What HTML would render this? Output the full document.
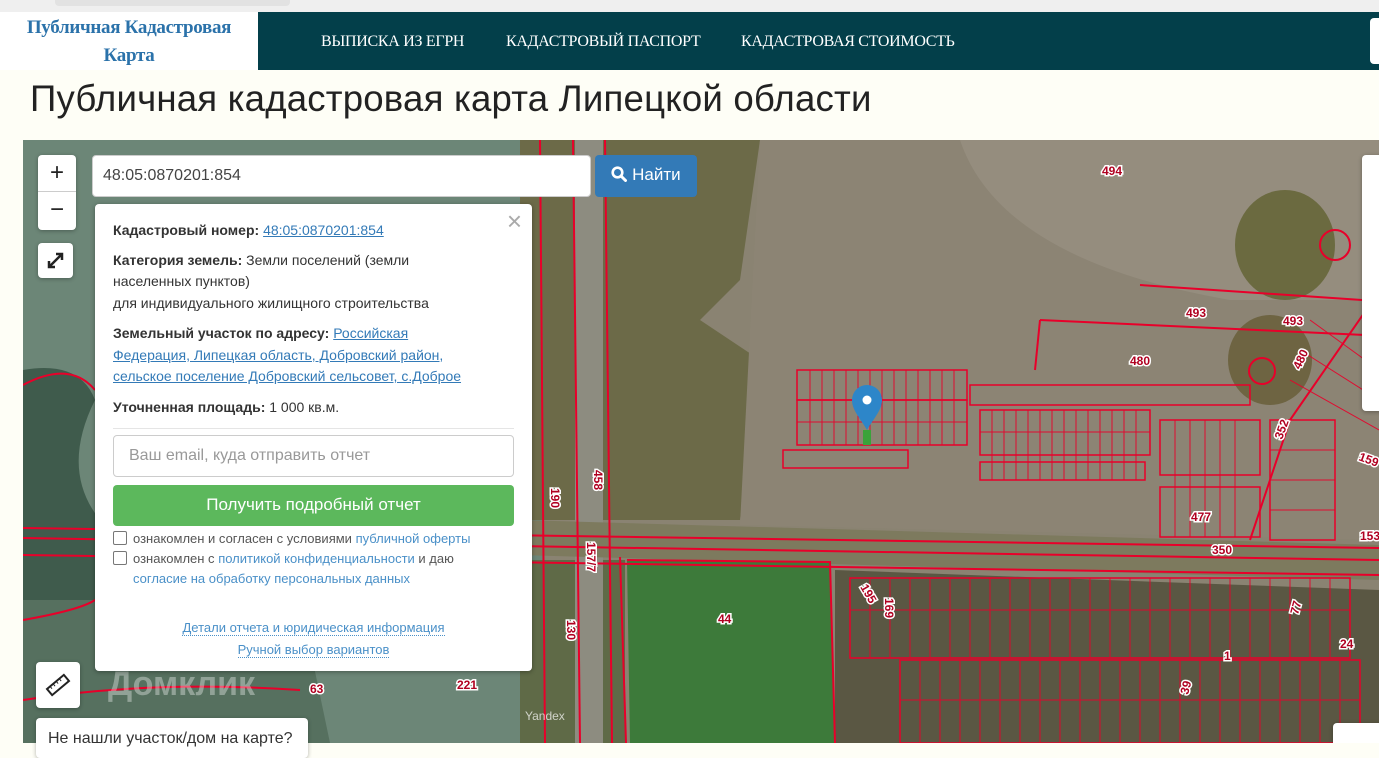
<!DOCTYPE html>
<html><head><meta charset="utf-8">
<style>
*{box-sizing:border-box;margin:0;padding:0}
body{width:1379px;height:743px;overflow:hidden;background:#fefef6;font-family:"Liberation Sans",sans-serif;position:relative}
.top{position:absolute;left:0;top:0;width:1379px;height:12px;background:#efefef}
.top i{position:absolute;left:55px;top:0;width:235px;height:6px;background:#e2e2e2;border-radius:0 0 4px 4px}
.logo{position:absolute;left:0;top:12px;width:258px;height:58px;background:#fff;text-align:center;font-family:"Liberation Serif",serif;font-weight:bold;color:#2b72aa;font-size:19px;line-height:28px;padding-top:2px;letter-spacing:-0.3px}
.nav{position:absolute;left:258px;top:12px;width:1121px;height:58px;background:#033f4a;color:#fff;font-family:"Liberation Serif",serif;font-size:16px}
.nav span{position:absolute;top:21px;letter-spacing:-0.3px}
.nav b{position:absolute;left:1112px;top:6px;width:20px;height:46px;background:#fff;border-radius:4px}
h1{position:absolute;left:30px;top:78px;font-weight:300;font-size:36.6px;color:#222;white-space:nowrap;letter-spacing:0.2px}
.map{position:absolute;left:23px;top:140px;width:1356px;height:603px;overflow:hidden}
.ctl{position:absolute;background:#fff;border-radius:4px;box-shadow:0 1px 4px rgba(0,0,0,.3)}
.pop{position:absolute;left:95px;top:204px;width:437px;height:467px;background:#fff;border-radius:4px;box-shadow:0 1px 5px rgba(0,0,0,.35);font-size:14px;color:#333;padding:16px 18px;white-space:nowrap}
.pop p{line-height:21.5px;margin-bottom:9px}
.pop a{color:#337ab7;text-decoration:underline}
.lbl{font-size:13px;color:#555;line-height:20px}
.lbl span{color:#4a90c8}
.cb{display:inline-block;width:14px;height:14px;border:1px solid #777;border-radius:2px;vertical-align:-2px;margin-right:6px;background:#fff}
</style></head><body>
<div class="top"><i></i></div>
<div class="logo">Публичная Кадастровая<br>Карта</div>
<div class="nav"><span style="left:63px">ВЫПИСКА ИЗ ЕГРН</span><span style="left:248px">КАДАСТРОВЫЙ ПАСПОРТ</span><span style="left:483px">КАДАСТРОВАЯ СТОИМОСТЬ</span><b></b></div>
<h1>Публичная кадастровая карта Липецкой области</h1>
<div class="map">
<svg width="1356" height="603" viewBox="23 140 1356 603" xmlns="http://www.w3.org/2000/svg" style="position:absolute;left:0;top:0">
<rect x="23" y="140" width="1356" height="603" fill="#8a8372"/>
<rect x="23" y="140" width="520" height="603" fill="#6c8677"/>
<path d="M23 370 Q80 360 95 400 Q60 470 100 520 L95 600 L23 600Z" fill="#3f5b4c"/>
<path d="M23 600 L300 600 L330 743 L23 743Z" fill="#56705f"/>
<path d="M520 140 L760 140 L740 280 L700 320 L760 360 L740 520 L520 520Z" fill="#6c6a48"/>
<path d="M520 560 L625 560 L625 743 L520 743Z" fill="#5f6a47"/>
<rect x="575" y="140" width="28" height="603" fill="#8d8c80"/>
<path d="M760 140 L1379 140 L1379 540 L740 525 Z" fill="#8c8474"/>
<path d="M960 140 L1379 140 L1379 300 L1230 300 Q1000 260 960 140Z" fill="#958d7e"/>
<ellipse cx="1285" cy="245" rx="50" ry="55" fill="#6b6a40"/>
<ellipse cx="1270" cy="360" rx="42" ry="45" fill="#6e6442"/>
<path d="M520 520 L1379 545 L1379 580 L520 555Z" fill="#7d7a5e"/>
<path d="M627 560 L830 562 L835 743 L630 743Z" fill="#3d7a3a"/>
<path d="M835 570 L1379 590 L1379 743 L835 743Z" fill="#5a5743"/>
<g stroke="#e8002a" stroke-width="2" fill="none">
<path d="M23 528 L1379 548"/><path d="M23 538 L1379 560"/><path d="M23 555 L1379 575"/>
<path d="M573 140 L580 743"/><path d="M605 140 L612 743"/><path d="M540 140 L545 743"/>
<path d="M627 560 L830 562 L835 743"/><path d="M620 557 L626 743"/>
<path d="M1040 320 L1365 335"/><path d="M1040 320 L1035 370"/><path d="M1140 285 L1362 300"/>
<path d="M1380 290 L1290 420 L1250 540"/>
<path d="M23 700 Q150 680 300 690"/><path d="M23 385 Q70 360 95 390"/><path d="M23 620 Q80 610 95 600"/>
</g>
<g stroke="#e8002a" stroke-width="1.5" fill="none">
<rect x="797" y="370" width="170" height="30"/><rect x="797" y="400" width="170" height="45"/><rect x="783" y="450" width="125" height="18"/>
<rect x="980" y="410" width="170" height="45"/><rect x="980" y="462" width="165" height="18"/><rect x="1160" y="420" width="100" height="55"/>
<rect x="1160" y="487" width="100" height="50"/><rect x="970" y="385" width="280" height="20"/>
<rect x="850" y="578" width="500" height="80"/><rect x="900" y="660" width="460" height="83"/><rect x="1270" y="420" width="65" height="120"/>
</g>
<g stroke="#e8002a" stroke-width="1" opacity=".9">
<path d="M810 370V445M822 370V445M834 370V445M846 370V445M858 370V445M870 370V445M882 370V445M894 370V445M906 370V445M918 370V445M930 370V445M942 370V445M954 370V445"/>
<path d="M992 410V480M1004 410V480M1016 410V480M1028 410V480M1040 410V480M1052 410V480M1064 410V480M1076 410V480M1088 410V480M1100 410V480M1112 410V480M1124 410V480M1136 410V480M1175 420V537M1190 420V537M1205 420V537M1220 420V537M1235 420V537"/>
<path d="M797 422H967M980 432H1150M850 610H1350M900 700H1360M1270 450H1335M1270 480H1335M1270 510H1335"/>
<path d="M870 578V658M890 578V658M910 578V658M930 578V658M950 578V658M970 578V658M990 578V658M1010 578V658M1030 578V658M1050 578V658M1070 578V658M1090 578V658M1110 578V658M1130 578V658M1150 578V658M1170 578V658M1190 578V658M1210 578V658M1230 578V658M1250 578V658M1270 578V658M1290 578V658M1310 578V658M1330 578V658"/>
<path d="M920 660V743M940 660V743M960 660V743M980 660V743M1000 660V743M1020 660V743M1040 660V743M1060 660V743M1080 660V743M1100 660V743M1120 660V743M1140 660V743M1160 660V743M1180 660V743M1200 660V743M1220 660V743M1240 660V743M1260 660V743M1280 660V743M1300 660V743M1320 660V743M1340 660V743"/>
<path d="M1300 350L1379 400M1290 380L1379 430M1310 320L1379 370"/>
</g>
<circle cx="1335" cy="245" r="15" stroke="#e8002a" stroke-width="2" fill="none"/>
<circle cx="1262" cy="371" r="13" stroke="#e8002a" stroke-width="2" fill="none"/>
<rect x="863" y="430" width="8" height="15" fill="#3aa33a"/>
<path d="M867 430 C860 418 852 410 852 400 A15 15 0 0 1 882 400 C882 410 874 418 867 430Z" fill="#2d86c9"/>
<circle cx="867" cy="400" r="4.5" fill="#fff"/>
<g font-size="12" fill="#b00020" font-weight="bold" font-family="Liberation Sans" stroke="#fff" stroke-width="3" paint-order="stroke">
<text x="1102" y="175">494</text><text x="1186" y="317">493</text><text x="1283" y="325">493</text><text x="1130" y="365">480</text>
<text x="1191" y="521">477</text><text x="1212" y="554">350</text><text x="718" y="623">44</text><text x="310" y="693">63</text><text x="457" y="689">221</text>
<text x="1224" y="660">1</text><text x="1340" y="648">24</text>
<text transform="translate(594 470) rotate(90)">458</text><text transform="translate(551 488) rotate(90)">190</text>
<text transform="translate(587 542) rotate(90)">157/7</text><text transform="translate(567 620) rotate(90)">130</text>
<text transform="translate(1282 440) rotate(-70)">352</text><text transform="translate(1300 370) rotate(-65)">480</text>
<text transform="translate(885 598) rotate(90)">169</text><text transform="translate(860 587) rotate(60)">195</text>
<text transform="translate(1298 615) rotate(-75)">77</text><text transform="translate(1188 695) rotate(-75)">39</text>
<text transform="translate(1358 460) rotate(20)">159</text><text x="1360" y="540">153</text>
</g>
<text x="108" y="695" font-size="34" font-weight="bold" fill="#fff" opacity=".35" font-family="Liberation Sans">Домклик</text>
<text x="525" y="720" font-size="12" fill="#fff" opacity=".7" font-family="Liberation Sans">Yandex</text>
</svg>
<div class="ctl" style="left:1339px;top:15px;width:30px;height:256px"></div>
<div class="ctl" style="left:1310px;top:583px;width:60px;height:30px"></div>
</div>
<div class="ctl" style="left:38px;top:155px;width:38px;height:75px"><div style="text-align:center;font-size:24px;line-height:36px;color:#222">+</div><div style="border-top:1px solid #ccc;text-align:center;font-size:24px;line-height:36px;color:#222">−</div></div>
<div class="ctl" style="left:38px;top:243px;width:35px;height:35px"><svg width="35" height="35"><path d="M12 23 L23 12 M18 11 H24 V17 M11 18 V24 H17" stroke="#222" stroke-width="2.5" fill="none"/></svg></div>
<input style="position:absolute;left:92px;top:155px;width:499px;height:42px;border:1px solid #ccc;border-radius:4px;font-size:16px;padding-left:10px;color:#444;font-family:'Liberation Sans',sans-serif" value="48:05:0870201:854">
<div style="position:absolute;left:595px;top:155px;width:102px;height:42px;background:#337ab7;border-radius:4px;color:#fff;font-size:17px;line-height:40px;text-align:center"><svg width="16" height="16" style="vertical-align:-2px"><circle cx="6.5" cy="6.5" r="4.8" stroke="#fff" stroke-width="2.6" fill="none"/><path d="M10 10 L14.5 14.5" stroke="#fff" stroke-width="3" stroke-linecap="round"/></svg> Найти</div>
<div class="pop">
<div style="position:absolute;right:10px;top:2px;font-size:26px;color:#aaa">×</div>
<p style="margin-bottom:8px"><b>Кадастровый номер:</b> <a>48:05:0870201:854</a></p>
<p><b>Категория земель:</b> Земли поселений (земли<br>населенных пунктов)<br>для индивидуального жилищного строительства</p>
<p><b>Земельный участок по адресу:</b> <a>Российская</a><br><a>Федерация, Липецкая область, Добровский район,</a><br><a>сельское поселение Добровский сельсовет, с.Доброе</a></p>
<p style="border-bottom:1px solid #e5e5e5;padding-bottom:10px;margin-bottom:6px"><b>Уточненная площадь:</b> 1 000 кв.м.</p>
<div style="height:42px;border:1px solid #ccc;border-radius:4px;font-size:16px;color:#999;line-height:40px;padding-left:15px">Ваш email, куда отправить отчет</div>
<div style="margin-top:8px;height:41px;background:#5cb85c;border-radius:4px;color:#fff;font-size:17px;line-height:40px;text-align:center">Получить подробный отчет</div>
<div class="lbl" style="margin-top:3px"><i class="cb"></i>ознакомлен и согласен с условиями <span>публичной оферты</span></div>
<div class="lbl"><i class="cb"></i>ознакомлен с <span>политикой конфиденциальности</span> и даю<br><span style="margin-left:20px">согласие на обработку персональных данных</span></div>
<div class="lbl" style="text-align:center;margin-top:28px;line-height:22px"><span style="border-bottom:1px dotted #4a90c8">Детали отчета и юридическая информация</span><br><span style="border-bottom:1px dotted #4a90c8">Ручной выбор вариантов</span></div>
</div>
<div class="ctl" style="left:36px;top:662px;width:44px;height:46px"><svg width="44" height="46"><g transform="rotate(-40 22 23)"><rect x="11" y="19" width="22" height="8" stroke="#222" stroke-width="2" fill="none"/><path d="M15 19v3M19 19v3M23 19v3M27 19v3" stroke="#222" stroke-width="1"/></g></svg></div>
<div class="ctl" style="left:36px;top:718px;width:272px;height:40px;font-size:16px;color:#333;padding:12px 0 0 12px">Не нашли участок/дом на карте?</div>
</body></html>
